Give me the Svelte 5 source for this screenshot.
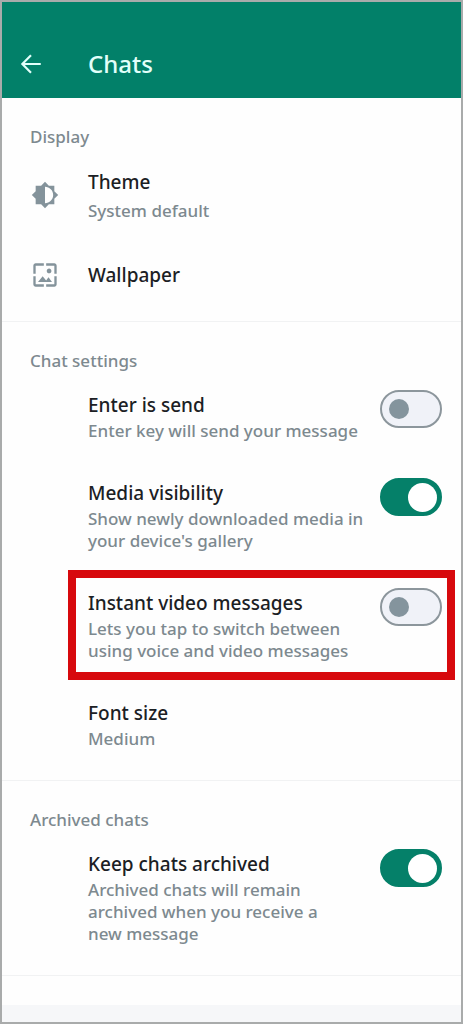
<script>
	let sections = $state([
		{
			title: 'Display',
			items: [
				{ title: 'Theme', lines: ['System default'], icon: 'theme' },
				{ title: 'Wallpaper', lines: [], icon: 'wallpaper' }
			]
		},
		{
			title: 'Chat settings',
			items: [
				{ title: 'Enter is send', lines: ['Enter key will send your message'], toggle: true, on: false },
				{
					title: 'Media visibility',
					lines: ['Show newly downloaded media in', "your device's gallery"],
					toggle: true,
					on: true
				},
				{
					title: 'Instant video messages',
					lines: ['Lets you tap to switch between', 'using voice and video messages'],
					toggle: true,
					on: false,
					highlight: true
				},
				{ title: 'Font size', lines: ['Medium'] }
			]
		},
		{
			title: 'Archived chats',
			items: [
				{
					title: 'Keep chats archived',
					lines: ['Archived chats will remain', 'archived when you receive a', 'new message'],
					toggle: true,
					on: true
				}
			]
		}
	]);
</script>

{#snippet text(item)}
	<span class="text">
		<span class="title">{item.title}</span>
		{#each item.lines as line}
			<span class="line">{line}</span>
		{/each}
	</span>
{/snippet}

<div class="screen">
	<header>
		<button class="back" aria-label="Back">
			<svg viewBox="0 0 24 24" width="26" height="26" aria-hidden="true">
				<path d="M21 12H4M12 4l-8 8 8 8" fill="none" stroke="currentColor" stroke-width="2" />
			</svg>
		</button>
		<h1>Chats</h1>
	</header>

	<main>
		{#each sections as section}
			<section>
				<h2>{section.title}</h2>
				{#each section.items as item}
					{#if item.toggle}
						<label class="row" class:highlight={item.highlight}>
							{@render text(item)}
							<input type="checkbox" role="switch" bind:checked={item.on} />
						</label>
					{:else if item.icon}
						<button class="row with-icon">
							{#if item.icon === 'theme'}
								<svg viewBox="0 0 24 24" width="28" height="28" aria-hidden="true">
									<path
										fill="currentColor"
										d="M20 15.310L23.310 12 20 8.690V4h-4.690L12 .69 8.690 4H4v4.690L.69 12 4 15.310V20h4.690L12 23.310 15.310 20H20v-4.690zM12 19V5c3.870 0 7 3.130 7 7s-3.130 7-7 7z"
									/>
								</svg>
							{:else}
								<svg viewBox="0 0 24 24" width="28" height="28" aria-hidden="true">
									<path
										fill="currentColor"
										d="M4 4h7V2H4c-1.100 0-2 .9-2 2v7h2V4zm6 9l-4 5h12l-3-4-2.030 2.710L10 13zm7.500-4.500c0-1.100-.9-2-2-2s-2 .9-2 2 .9 2 2 2 2-.9 2-2zM20 2h-7v2h7v7h2V4c0-1.100-.9-2-2-2zm0 18h-7v2h7c1.100 0 2-.9 2-2v-7h-2v7zM4 13H2v7c0 1.100.9 2 2 2h7v-2H4v-7z"
									/>
								</svg>
							{/if}
							{@render text(item)}
						</button>
					{:else}
						<button class="row">{@render text(item)}</button>
					{/if}
				{/each}
			</section>
		{/each}
	</main>

	<footer></footer>
</div>

<style>
	:global(body) {
		margin: 0;
	}

	.screen {
		display: flex;
		flex-direction: column;
		box-sizing: border-box;
		min-height: 100vh;
		border: 2px solid #a9abab;
		background: #fefefe;
		color: #1b2024;
		font-family: 'Noto Sans', Roboto, sans-serif;
		font-weight: 500;
	}

	header {
		display: flex;
		align-items: center;
		gap: 44px;
		padding: 44px 16px 16px;
		background: #028069;
		color: #e2fffa;
	}

	button {
		border: 0;
		padding: 0;
		background: none;
		color: inherit;
		font: inherit;
		text-align: left;
		cursor: pointer;
	}

	.back {
		display: flex;
	}

	h1 {
		margin: 0;
		font-size: 24px;
		line-height: 36px;
		font-weight: 500;
	}

	main {
		flex: 1;
	}

	section {
		padding: 28px 0 12px;
		border-bottom: 1px solid #f1f2f3;
	}

	h2 {
		margin: 0 28px;
		font-size: 17px;
		line-height: 22px;
		font-weight: 500;
		color: #7d898f;
	}

	.row {
		display: flex;
		align-items: flex-start;
		justify-content: space-between;
		box-sizing: border-box;
		width: calc(100% - 72px);
		margin: 0 6px 0 66px;
		padding: 18px 13px 18px 20px;
		cursor: pointer;
	}

	.with-icon {
		align-items: center;
		justify-content: flex-start;
		gap: 29px;
		width: 100%;
		margin: 0;
		padding: 19px 28px 19px 29px;
	}

	/* Frame drawn inside the row so neighbours keep their spacing */
	.highlight {
		box-shadow: inset 0 0 0 8px #d7090d;
	}

	.row svg {
		color: #84939b;
	}

	.text {
		display: flex;
		flex-direction: column;
	}

	.title {
		font-size: 19px;
		line-height: 30px;
	}

	.line {
		font-size: 17px;
		line-height: 22px;
		color: #7d898f;
		white-space: nowrap;
	}

	.with-icon .line {
		margin-top: 3px;
	}

	input {
		appearance: none;
		display: flex;
		align-items: center;
		flex: none;
		box-sizing: border-box;
		width: 62px;
		height: 38px;
		margin: 0;
		padding: 0 7px;
		border: 2px solid #8c969c;
		border-radius: 19px;
		background: #f0f2f8;
		cursor: pointer;
	}

	input::before {
		content: '';
		width: 20px;
		height: 20px;
		border-radius: 50%;
		background: #84949d;
	}

	input:checked {
		justify-content: flex-end;
		padding: 0 3px;
		border-color: #058069;
		background: #058069;
	}

	input:checked::before {
		width: 29px;
		height: 29px;
		background: #fff;
	}

	footer {
		height: 17px;
		background: #f6f7f9;
	}
</style>
